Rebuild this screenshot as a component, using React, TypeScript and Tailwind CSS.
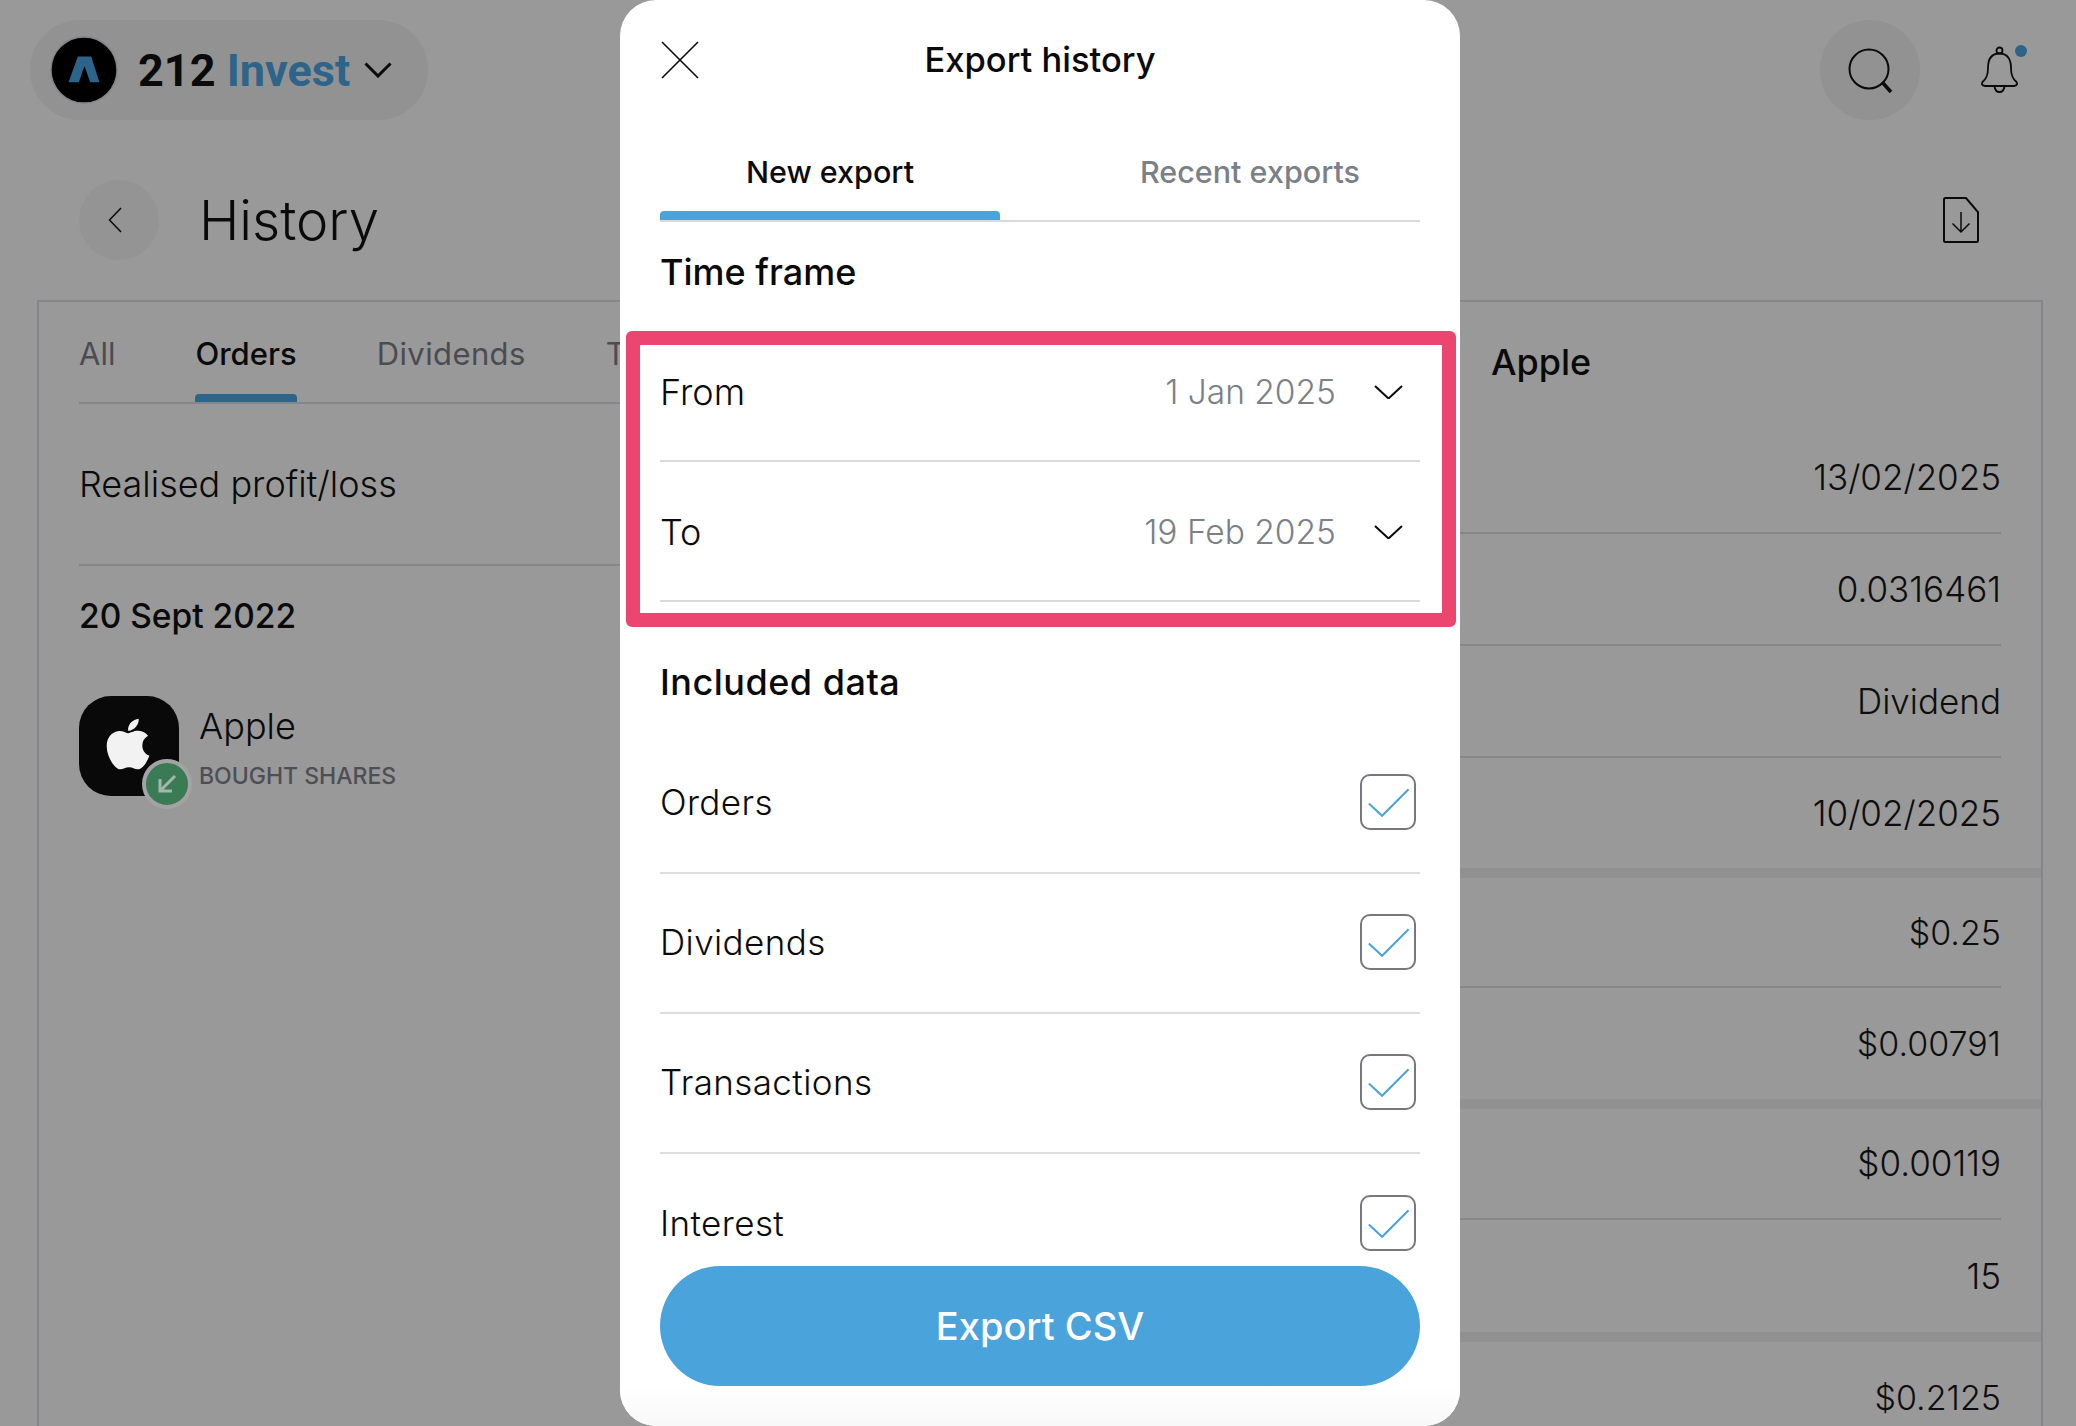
import React from "react";
import { FaApple } from "react-icons/fa";

const F = "font-['Inter',sans-serif]";

function Chevron({ className = "" }: { className?: string }) {
  return (
    <svg viewBox="0 0 29 14" fill="none" className={className}>
      <path d="M1 1l13.5 12.5L28 1" stroke="#0a0a0a" strokeWidth="2" />
    </svg>
  );
}

function Check() {
  return (
    <div className="w-[56px] h-[56px] rounded-[10px] border-2 border-[#77787d] relative shrink-0">
      <svg viewBox="0 0 55 55" fill="none" className="absolute -inset-[2px] w-[56px] h-[56px]">
        <path d="M8.7 29L21.7 41L47.7 15" stroke="#4aa3db" strokeWidth="2" />
      </svg>
    </div>
  );
}

const DataRow = ({ label, last }: { label: string; last?: boolean }) => (
  <div className={`h-[140px] flex items-center justify-between pr-[4px] pb-[2px] shrink-0 ${last ? "" : "border-b-2 border-[#dcdce3]"}`}>
    <span className="text-[35px] font-light text-[#0a0a0a] tracking-[0.4px]">{label}</span>
    <Check />
  </div>
);

const DateRow = ({ label, value }: { label: string; value: string }) => (
  <div className="h-[140px] flex justify-between items-start pt-[45px] border-b-2 border-[#d9d9e0] shrink-0">
    <span className="text-[36px] leading-[50px] font-light text-[#0a0a0a]">{label}</span>
    <div className="flex items-center">
      <span className="text-[33.5px] leading-[50px] font-light text-[#7b7f87]">{value}</span>
      <Chevron className="w-[29px] h-[14px] ml-[38px] mr-[17px]" />
    </div>
  </div>
);

const Value = ({ v, h, line = true, money }: { v: string; h: number; line?: boolean; money?: boolean }) => (
  <div style={{ height: h }} className="pr-[40px] shrink-0">
    <div className={`h-full flex items-center justify-end font-light text-[#0d0d0d] ${money ? "text-[34px]" : "text-[35px]"} ${line ? "border-b-2 border-[#858588]" : ""}`}>
      {v}
    </div>
  </div>
);

const Band = () => <div className="h-[10px] bg-[#919191] shrink-0" />;

export default function App() {
  return (
    <div className={`relative w-[2076px] h-[1426px] overflow-hidden bg-[#999999] ${F}`}>
      {/* Header */}
      <header className="flex justify-between items-center pl-[30px] pr-[48px] pt-[20px] h-[120px]">
        <div className="h-[100px] w-[398px] rounded-full bg-[#929292] flex items-center pl-[20px]">
          <svg viewBox="0 0 66 66" className="w-[68px] h-[68px] shrink-0">
            <circle cx="33" cy="33" r="32.2" fill="#000" stroke="#85858c" strokeWidth="1.6" />
            <path d="M27 20H40L48 45H39L33.5 29L28 45H18Z" fill="#2d6489" />
          </svg>
          <span className="ml-[20px] text-[45px] leading-none font-['Roboto',sans-serif] font-bold text-[#0a0a0a]">
            212 <span className="text-[#2d6489]">Invest</span>
          </span>
          <svg viewBox="0 0 28 16" fill="none" className="w-[28px] h-[16px] ml-[14px]">
            <path d="M1.5 1.5L14 14L26.5 1.5" stroke="#0a0a0a" strokeWidth="3" />
          </svg>
        </div>
        <div className="flex items-center">
          <div className="w-[100px] h-[100px] rounded-full bg-[#929292] flex items-center justify-center">
            <svg viewBox="0 0 48 48" fill="none" className="w-[48px] h-[48px] ml-[2px] mt-[2px]">
              <circle cx="22" cy="22" r="19.5" stroke="#0a0a0a" strokeWidth="2" />
              <path d="M35 35L44 45" stroke="#0a0a0a" strokeWidth="3.5" />
            </svg>
          </div>
          <div className="relative w-[48px] h-[48px] ml-[60px]">
            <svg viewBox="0 0 40 48" fill="none" className="w-[40px] h-[48px]">
              <circle cx="19.5" cy="4.5" r="3" stroke="#0a0a0a" strokeWidth="1.8" />
              <path d="M19.5 7.5C11 7.5 8 14 8 22C8 30 6 33 2.5 36C1 38 2 39.5 5 40H34C37 39.5 38 38 36.5 36C33 33 31 30 31 22C31 14 28 7.5 19.5 7.5Z" stroke="#0a0a0a" strokeWidth="1.8" />
              <path d="M14.5 40.5C15 44 17 46 19.5 46C22 46 24 44 24.5 40.5" stroke="#0a0a0a" strokeWidth="1.8" />
            </svg>
            <span className="absolute left-[35px] -top-[1px] w-[12px] h-[12px] rounded-full bg-[#2d6489]" />
          </div>
        </div>
      </header>

      {/* Title */}
      <div className="flex items-center justify-between pl-[79px] pr-[97px] mt-[60px] h-[80px]">
        <div className="flex items-center">
          <div className="w-[80px] h-[80px] rounded-full bg-[#949494] flex items-center justify-center">
            <svg viewBox="0 0 14 26" fill="none" className="w-[14px] h-[26px] -ml-[8px]">
              <path d="M13 1L1.5 13L13 25" stroke="#0a0a0a" strokeWidth="1.5" />
            </svg>
          </div>
          <h1 className="ml-[40px] text-[54.5px] font-light text-[#0a0a0a] leading-none">History</h1>
        </div>
        <svg viewBox="0 0 36 46" fill="none" className="w-[36px] h-[46px]">
          <path d="M2.5 1H23L35 15V43.5C35 44.5 34.5 45 33.5 45H2.5C1.5 45 1 44.5 1 43.5V2.5C1 1.5 1.5 1 2.5 1Z" stroke="#0a0a0a" strokeWidth="2" />
          <path d="M18 15V35M9.5 26.5L18 35L26.5 26.5" stroke="#0a0a0a" strokeWidth="1.5" />
        </svg>
      </div>

      {/* Panel */}
      <section className="ml-[37px] mr-[33px] mt-[40px] h-[1140px] border-2 border-b-0 border-[#85858c] flex">
        <div className="w-[1361px] shrink-0 pl-[40px]">
          <div className="h-[102px] flex gap-[80px] border-b-2 border-[#85858c] text-[31px]">
            <span className="h-[100px] pt-[5px] flex items-center text-[#4a4c52]">All</span>
            <span className="relative h-[100px] pt-[5px] flex items-center font-medium text-[#0a0a0a]">
              Orders
              <span className="absolute left-0 right-0 bottom-0 h-[8px] rounded-t-[4px] bg-[#2d6489]" />
            </span>
            <span className="h-[100px] pt-[5px] flex items-center text-[#4a4c52] tracking-[0.4px]">Dividends</span>
            <span className="h-[100px] pt-[5px] flex items-center text-[#4a4c52]">Transactions</span>
          </div>
          <div className="h-[162px] flex items-center border-b-2 border-[#85858c] text-[36px] font-light text-[#0a0a0a]">
            Realised profit/loss
          </div>
          <div className="h-[102px] pb-[2px] flex items-center text-[33.5px] font-medium text-[#0a0a0a]">20 Sept 2022</div>
          <div className="flex mt-[28px]">
            <div className="relative w-[100px] h-[100px] rounded-[32px] bg-[#090909] flex items-center justify-center">
              <FaApple className="w-[52px] h-[58px] text-[#f2f2f2] -mt-[4px] -ml-[2px]" />
              <span className="absolute left-[63px] top-[63px] w-[50px] h-[50px] rounded-full bg-[#3a7a55] border-[4px] border-[#a3a3a3] flex items-center justify-center">
                <svg viewBox="0 0 20 20" fill="none" className="w-[20px] h-[20px]">
                  <path d="M18 2L3 17M3 5V17H15" stroke="#a3b8ab" strokeWidth="3" />
                </svg>
              </span>
            </div>
            <div className="ml-[20px]">
              <div className="text-[36px] leading-[50px] mt-[5px] font-light text-[#0a0a0a]">Apple</div>
              <div className="text-[23px] leading-[34px] mt-[8px] font-medium text-[#4d4f55]">BOUGHT SHARES</div>
            </div>
          </div>
        </div>
        <div className="flex-1 flex flex-col">
          <div className="h-[120px] flex items-center pl-[91px] text-[36px] font-medium text-[#0a0a0a] shrink-0">Apple</div>
          <Value v="13/02/2025" h={112} />
          <Value v="0.0316461" h={112} />
          <Value v="Dividend" h={112} />
          <Value v="10/02/2025" h={110} line={false} />
          <Band />
          <Value v="$0.25" h={110} money />
          <Value v="$0.00791" h={111} line={false} money />
          <Band />
          <Value v="$0.00119" h={111} />
          <Value v="15" h={112} line={false} />
          <Band />
          <Value v="$0.2125" h={111} line={false} money />
        </div>
      </section>

      {/* Modal */}
      <div className="absolute left-[620px] top-0 w-[840px] h-[1426px] rounded-[36px] bg-white overflow-hidden px-[40px] flex flex-col">
        <div className="relative h-[120px] flex items-center justify-center shrink-0">
          <svg viewBox="0 0 38 38" fill="none" className="absolute left-[1px] top-[41px] w-[38px] h-[38px]">
            <path d="M1 1L37 37M37 1L1 37" stroke="#0a0a0a" strokeWidth="1.6" />
          </svg>
          <span className="text-[34.5px] font-medium text-[#0a0a0a]">Export history</span>
        </div>
        <div className="flex gap-[80px] h-[102px] border-b-2 border-[#d9d9e0] shrink-0 text-[30.5px]">
          <div className="relative w-[340px] flex items-center justify-center font-medium text-[#0a0a0a] pt-[3px]">
            New export
            <span className="absolute left-0 right-0 bottom-0 h-[9px] rounded-t-[4px] bg-[#4aa3db]" />
          </div>
          <div className="flex-1 flex items-center justify-center text-[#7b7f87] font-medium pt-[3px]">Recent exports</div>
        </div>
        <div className="h-[100px] flex items-center text-[36px] font-medium text-[#0a0a0a] shrink-0">Time frame</div>
        <DateRow label="From" value="1 Jan 2025" />
        <DateRow label="To" value="19 Feb 2025" />
        <div className="h-[132px] pt-[28px] flex items-center text-[36px] tracking-[0.5px] font-medium text-[#0a0a0a] shrink-0">Included data</div>
        <div>
          <DataRow label="Orders" />
          <DataRow label="Dividends" />
          <DataRow label="Transactions" />
          <DataRow label="Interest" last />
        </div>
        {/* Pink annotation */}
        <div className="absolute left-[6px] top-[331px] w-[830px] h-[296px] border-[14px] border-[#ec4570] rounded-[6px]" />
        {/* Footer button */}
        <div className="absolute left-0 right-0 bottom-0 h-[40px] bg-gradient-to-b from-white to-[#f8f8f8]" />
        <button className="absolute left-[40px] top-[1266px] w-[760px] h-[120px] rounded-full bg-[#4aa3db] text-white text-[38px] font-medium">
          Export CSV
        </button>
      </div>
    </div>
  );
}
